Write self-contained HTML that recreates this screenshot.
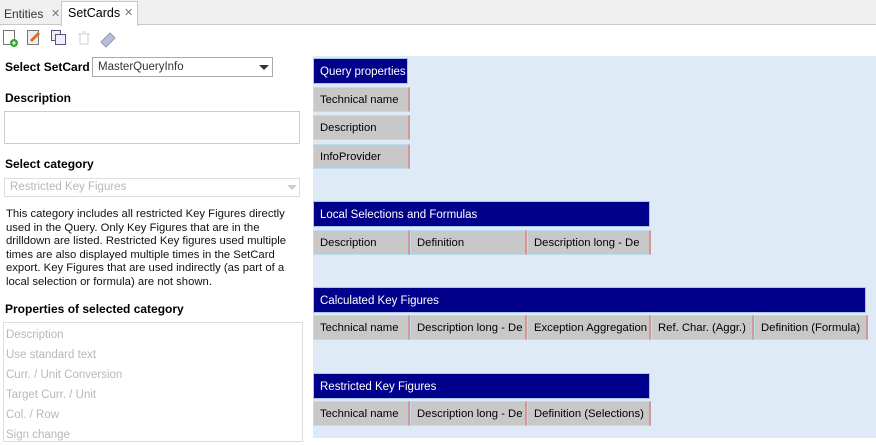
<!DOCTYPE html>
<html><head><style>
*{margin:0;padding:0;box-sizing:border-box}
body{width:876px;height:438px;overflow:hidden;background:#fff;font-family:"Liberation Sans",sans-serif;font-size:12px;color:#000;position:relative}
.a{position:absolute;white-space:nowrap}
.b{font-weight:bold}
.h{position:absolute;background:#00008b;color:#fff;border:1px solid #a9c8e8;padding-left:6px;line-height:26px;font-size:11.5px;white-space:nowrap}
.c{position:absolute;background:#c8c8c8;border:1px solid #bcdcf2;border-right:2px solid #d09898;padding-left:6px;line-height:25px;font-size:11.3px;height:25px;white-space:nowrap;overflow:hidden}
.g{color:#b8b8b8}
</style></head><body>
<div class="a" style="left:0;top:0;width:876px;height:25px;background:#f0f0f0;border-bottom:1px solid #c8c8c8"></div>
<div class="a" style="left:4px;top:2px;line-height:24px;color:#333">Entities</div>
<div class="a" style="left:51px;top:2px;line-height:24px;color:#777;font-size:11px">✕</div>
<div class="a" style="left:61px;top:1px;width:77px;height:25px;background:#fff;border:1px solid #c8c8c8;border-bottom:none"></div>
<div class="a" style="left:68px;top:2px;line-height:22px;font-size:12.5px">SetCards</div>
<div class="a" style="left:124px;top:2px;line-height:22px;color:#777;font-size:11px">✕</div>
<svg class="a" style="left:0;top:26px" width="130" height="24">
<rect x="3.5" y="4.5" width="11" height="14" fill="#fff" stroke="#777"/><circle cx="14" cy="17" r="4" fill="#3a3"/><path d="M12 17h4M14 15v4" stroke="#fff"/>
<rect x="27.5" y="4.5" width="11" height="14" fill="#eee" stroke="#777"/><path d="M31 15l8-8" stroke="#e07020" stroke-width="3"/>
<rect x="51.5" y="4.5" width="9" height="10" fill="#eee" stroke="#557"/><rect x="55.5" y="8.5" width="10" height="10" fill="#eef" stroke="#557"/>
<path d="M78 8h12M80 8v10h8V8M82 6h4" stroke="#ccc" fill="none"/>
<path d="M101 16l9-9 5 5-9 9z" fill="#b8bde0" stroke="#99a"/>
</svg>
<div class="a b" style="left:5px;top:60px;font-size:12px">Select SetCard</div>
<div class="a" style="left:92px;top:57px;width:181px;height:20px;border:1px solid #aaa;line-height:18px;padding-left:5px;font-size:11.5px;color:#333">MasterQueryInfo</div>
<div class="a" style="left:259px;top:65px;border-left:5px solid transparent;border-right:5px solid transparent;border-top:5px solid #333"></div>
<div class="a b" style="left:5px;top:91px">Description</div>
<div class="a" style="left:4px;top:111px;width:296px;height:33px;border:1px solid #ccc"></div>
<div class="a b" style="left:5px;top:157px">Select category</div>
<div class="a g" style="left:4px;top:178px;width:296px;height:19px;border:1px solid #ddd;line-height:17px;padding-left:5px;font-size:11.5px">Restricted Key Figures</div>
<div class="a" style="left:287px;top:185px;border-left:5px solid transparent;border-right:5px solid transparent;border-top:5px solid #ccc"></div>
<div class="a" style="left:6px;top:208px;line-height:13.5px;font-size:11.3px;color:#111">This category includes all restricted Key Figures directly<br>used in the Query. Only Key Figures that are in the<br>drilldown are listed. Restricted Key figures used multiple<br>times are also displayed multiple times in the SetCard<br>export. Key Figures that are used indirectly (as part of a<br>local selection or formula) are not shown.</div>
<div class="a b" style="left:5px;top:302px">Properties of selected category</div>
<div class="a" style="left:3px;top:322px;width:300px;height:120px;border:1px solid #ddd"></div>
<div class="a g" style="left:6px;top:325px;line-height:20px;font-size:11.5px">Description<br>Use standard text<br>Curr. / Unit Conversion<br>Target Curr. / Unit<br>Col. / Row<br>Sign change</div>
<div class="a" style="left:313px;top:56px;width:563px;height:382px;background:#deeaf5"></div>
<div class="h" style="left:313px;top:58px;width:95px;height:26px">Query properties</div>
<div class="c" style="left:313px;top:87px;width:97px">Technical name</div>
<div class="c" style="left:313px;top:115px;width:97px">Description</div>
<div class="c" style="left:313px;top:144px;width:97px">InfoProvider</div>
<div class="h" style="left:313px;top:201px;width:337px;height:26px">Local Selections and Formulas</div>
<div class="c" style="left:313px;top:230px;width:97px">Description</div>
<div class="c" style="left:410px;top:230px;width:117px">Definition</div>
<div class="c" style="left:527px;top:230px;width:124px">Description long - De</div>
<div class="h" style="left:313px;top:287px;width:553px;height:26px">Calculated Key Figures</div>
<div class="c" style="left:313px;top:315px;width:97px">Technical name</div>
<div class="c" style="left:410px;top:315px;width:117px">Description long - De</div>
<div class="c" style="left:527px;top:315px;width:124px">Exception Aggregation</div>
<div class="c" style="left:651px;top:315px;width:103px">Ref. Char. (Aggr.)</div>
<div class="c" style="left:754px;top:315px;width:114px">Definition (Formula)</div>
<div class="h" style="left:313px;top:373px;width:337px;height:26px">Restricted Key Figures</div>
<div class="c" style="left:313px;top:401px;width:97px">Technical name</div>
<div class="c" style="left:410px;top:401px;width:117px">Description long - De</div>
<div class="c" style="left:527px;top:401px;width:124px">Definition (Selections)</div>
</body></html>
